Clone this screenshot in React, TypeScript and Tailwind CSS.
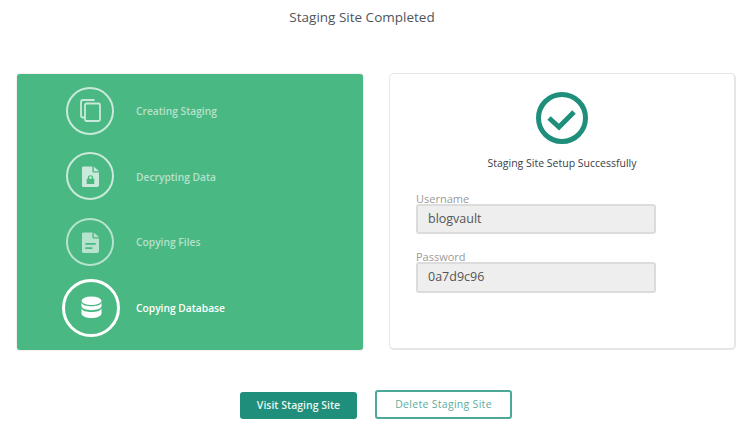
import type { ReactNode } from "react";

const font = { fontFamily: '"Open Sans", sans-serif' };

const CopyIcon = () => (
  <svg width="21" height="23" viewBox="0 0 21 23" fill="none" stroke="currentColor" strokeWidth="1.8">
    <path d="M4.5 18.5 H3 Q1 18.5 1 16.5 V3 Q1 1 3 1 H14.5" />
    <rect x="5" y="4.5" width="15" height="17.5" rx="1.5" />
  </svg>
);

const LockFileIcon = () => (
  <svg width="17" height="21" viewBox="0 0 18 24" preserveAspectRatio="none" fill="currentColor">
    <path
      fillRule="evenodd"
      d="M1.5 0.5 H11 V6 Q11 7.5 12.5 7.5 H18 V22 Q18 24 16 24 H1.5 Q0 24 0 22.5 V2 Q0 0.5 1.5 0.5 Z M5 14.5 V20.5 H13 V14.5 H11.8 V13 C11.8 9.6 6.2 9.6 6.2 13 V14.5 Z M7.6 14.5 V13 C7.6 11.4 10.4 11.4 10.4 13 V14.5 Z"
    />
    <path d="M12.5 0.5 L18 6 H12.5 Z" />
  </svg>
);

const FileIcon = () => (
  <svg width="17" height="21" viewBox="0 0 18 24" preserveAspectRatio="none" fill="currentColor">
    <path
      fillRule="evenodd"
      d="M1.5 0.5 H11 V6 Q11 7.5 12.5 7.5 H18 V22 Q18 24 16 24 H1.5 Q0 24 0 22.5 V2 Q0 0.5 1.5 0.5 Z M3.5 12.5 V14.5 H14.5 V12.5 Z M3.5 17.5 V19.5 H11 V17.5 Z"
    />
    <path d="M12.5 0.5 L18 6 H12.5 Z" />
  </svg>
);

const DatabaseIcon = () => (
  <svg width="21" height="23" viewBox="0 0 22 23" fill="currentColor">
    <ellipse cx="11" cy="4.5" rx="10.5" ry="4.5" />
    <path d="M0.5 6.5 C2 11.5 20 11.5 21.5 6.5 V10.5 C20 15.5 2 15.5 0.5 10.5 Z" />
    <path d="M0.5 12.5 C2 17.5 20 17.5 21.5 12.5 V18 C20 24 2 24 0.5 18 Z" />
  </svg>
);

type Step = { label: string; icon: ReactNode; tone: string; active?: boolean };

const steps: Step[] = [
  { label: "Creating Staging", icon: <CopyIcon />, tone: "text-white/70 border-white/70" },
  { label: "Decrypting Data", icon: <LockFileIcon />, tone: "text-white/70 border-white/70" },
  { label: "Copying Files", icon: <FileIcon />, tone: "text-white/60 border-white/60" },
  { label: "Copying Database", icon: <DatabaseIcon />, tone: "text-white border-white", active: true },
];

function Field({ label, value, tall }: { label: string; value: string; tall?: boolean }) {
  return (
    <div className="w-[240px]">
      <div className="h-[13px] text-[11px] leading-[15px] text-[#9a9a9a]">{label}</div>
      <div
        className={`flex items-center rounded-[3px] border-2 border-[#dcdcdc] bg-[#eeeeee] pl-[10px] text-[12.5px] text-[#555555] ${tall ? "h-[31px]" : "h-[30px]"}`}
      >
        {value}
      </div>
    </div>
  );
}

export default function App() {
  return (
    <div className="h-[436px] w-[750px] overflow-hidden bg-white" style={font}>
      {/* Title */}
      <h1 className="w-[724px] pt-[6px] text-center text-[13.5px] leading-[22px] text-[#50555b]">Staging Site Completed</h1>

      <div className="mt-[45px] flex items-start pl-[17px]">
        {/* Progress panel */}
        <div className="mt-px h-[276px] w-[346px] rounded-[3px] bg-[#4ab882] pt-[4px] shadow-[0_0_2px_rgba(0,0,0,0.2)]">
          {steps.map((s) => (
            <div key={s.label} className="flex h-[65.67px] items-center">
              <div className="flex w-[103px] justify-end">
                {s.active ? (
                  <div className={`flex h-[58px] w-[58px] items-center justify-center rounded-full border-[3px] ${s.tone}`}>
                    {s.icon}
                  </div>
                ) : (
                  <div className={`mr-[6px] flex h-[48px] w-[48px] items-center justify-center rounded-full border-2 ${s.tone}`}>
                    {s.icon}
                  </div>
                )}
              </div>
              <span
                className={`ml-[16px] pt-[2px] text-[10.25px] font-semibold ${s.active ? "text-white" : "text-white/60"}`}
              >
                {s.label}
              </span>
            </div>
          ))}
        </div>

        {/* Result card */}
        <div className="ml-[26px] flex h-[277px] w-[347px] flex-col rounded-[5px] border border-r-2 border-b-2 border-[#e6e6e6] pl-[26px]">
          <div className="w-[292px] pt-[18px]">
            <svg className="mx-auto block" width="52" height="52" viewBox="0 0 52 52" fill="none" stroke="#1f8f7c">
              <circle cx="26" cy="26" r="23.5" strokeWidth="5" />
              <path d="M13 26 L23 35 L38 20" strokeWidth="5" />
            </svg>
            <p className="mt-[12px] text-center text-[10.5px] leading-[14px] text-[#3b4048]">Staging Site Setup Successfully</p>
          </div>
          <div className="mt-[21px] flex flex-col gap-[15px]">
            <Field label="Username" value="blogvault" />
            <Field label="Password" value="0a7d9c96" tall />
          </div>
        </div>
      </div>

      {/* Actions */}
      <div className="mt-[40px] flex items-end pl-[240px]">
        <button className="h-[27px] w-[117px] rounded-[3px] bg-[#1f8f7c] text-[10.5px] font-semibold text-[#e8f5f2]">
          Visit Staging Site
        </button>
        <button className="ml-[18px] h-[29px] w-[137px] rounded-[3px] border-2 border-[#4da898] bg-white text-[10.5px] font-medium tracking-[0.3px] text-[#5cae9f]">
          Delete Staging Site
        </button>
      </div>
    </div>
  );
}
